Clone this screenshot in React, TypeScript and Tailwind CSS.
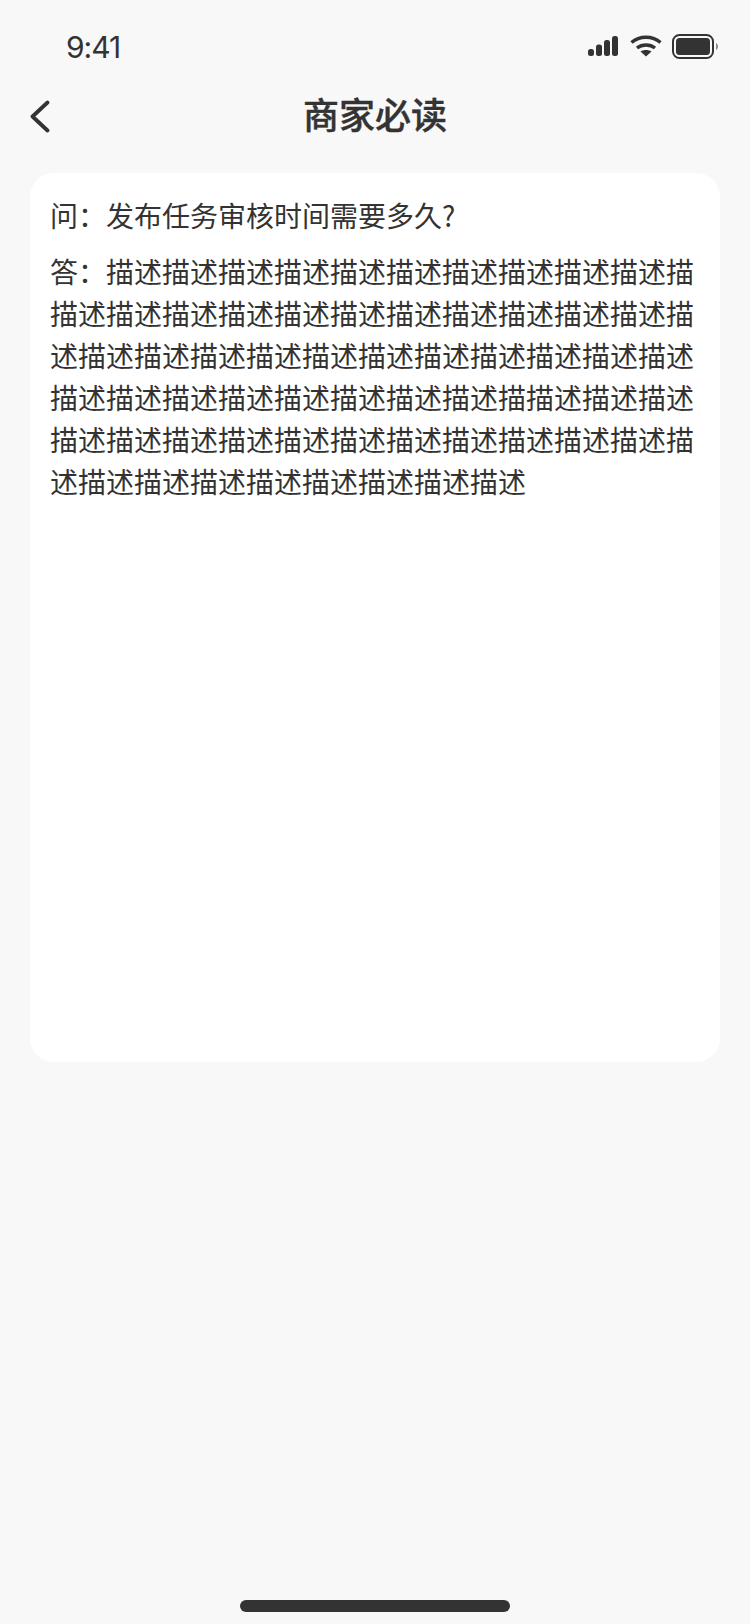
const fontStack = '[font-family:"Noto_Sans_CJK_SC","Noto_Sans",sans-serif]';

const colon = '\uFF1A';

const answer =
  '答' + colon +
  '描述'.repeat(10) + '描' +
  '描述'.repeat(11) + '描' +
  '述描'.repeat(11) + '述' +
  '描述'.repeat(8) + '描描述描述描述' +
  '描述'.repeat(11) + '描' +
  '述描'.repeat(8) + '述';

function StatusIcons() {
  return (
    <div className="flex items-center pb-[2px]">
      <svg width="30" height="20" viewBox="0 0 30 20" fill="#333">
        <rect x="0" y="13" width="6" height="7" rx="2.5" />
        <rect x="8" y="8.5" width="6" height="11.5" rx="2.5" />
        <rect x="16" y="4" width="6" height="16" rx="2.5" />
        <rect x="24" y="0" width="6" height="20" rx="2.5" />
      </svg>
      <svg className="ml-[12px]" width="32" height="22" viewBox="0 0 32 22" fill="none" stroke="#333" strokeWidth="3.5">
        <path d="M1.5 7.5C9.5 0.5 22.5 0.5 30.5 7.5" />
        <path d="M7 13C12 9 20 9 25 13" />
        <path d="M16 21.5L10.5 16.5C13.5 14.5 18.5 14.5 21.5 16.5Z" fill="#333" stroke="none" />
      </svg>
      <svg className="ml-[10px]" width="46" height="25" viewBox="0 0 46 25" fill="none">
        <rect x="1" y="1" width="40" height="23" rx="6.5" stroke="#333" strokeWidth="2" />
        <rect x="4" y="4" width="34" height="17" rx="3.5" fill="#333" />
        <path d="M44 9C45.2 9.5 46 11 46 12.5C46 14 45.2 15.5 44 16Z" fill="#888" />
      </svg>
    </div>
  );
}

export default function App() {
  return (
    <div className={`relative h-[1624px] w-[750px] bg-[#f8f8f8] text-[#333] ${fontStack}`}>
      <div className="flex h-[88px] items-center justify-between pl-[66px] pr-[32px] pt-[6px]">
        <span className="text-[30px] leading-none tracking-[-1px] font-['Inter',sans-serif]">9:41</span>
        <StatusIcons />
      </div>

      <div className="relative flex h-[54px] items-center justify-center pb-[5px]">
        <svg className="absolute left-[29px] top-[12px]" width="22" height="33" viewBox="0 0 22 33" fill="none" stroke="#333" strokeWidth="3.8" strokeLinecap="round" strokeLinejoin="round">
          <path d="M18.5 2.5L3.5 16.5L18.5 30.5" />
        </svg>
        <h1 className="text-[36px] font-medium leading-none [-webkit-text-stroke:0.4px_#333]">商家必读</h1>
      </div>

      <div className="mx-[30px] mt-[31px] h-[889px] rounded-[24px] bg-white px-[20px] pt-[21px]">
        <p className="text-[28px] leading-[42px]">{'问' + colon + '发布任务审核时间需要多久?'}</p>
        <p className="mt-[14px] break-all text-[28px] leading-[42px]">{answer}</p>
      </div>

      <div className="absolute bottom-[12px] left-[240px] h-[12px] w-[270px] rounded-full bg-[#333]" />
    </div>
  );
}
